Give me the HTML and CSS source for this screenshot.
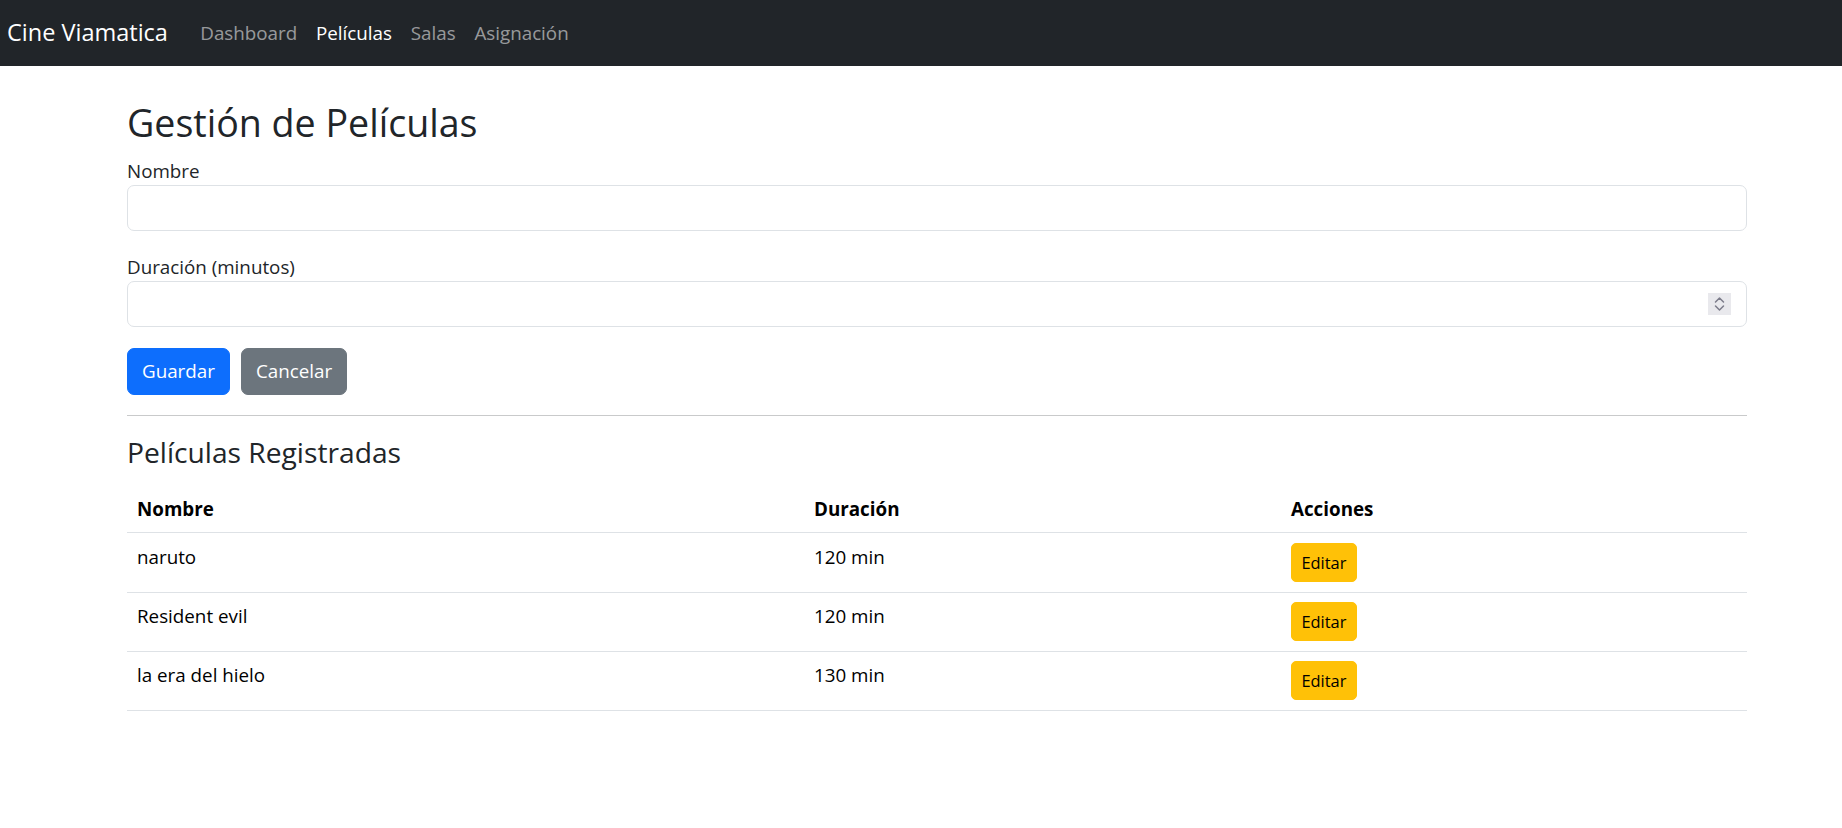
FILE: index.html
```html
<!DOCTYPE html>
<html lang="es">
<head>
<meta charset="utf-8">
<title>Cine Viamatica</title>
<link rel="stylesheet" href="styles.css">
</head>
<body>
<nav class="navbar">
  <a class="brand" href="#">Cine Viamatica</a>
  <ul class="nav">
    <li><a class="nav-link" href="#">Dashboard</a></li>
    <li><a class="nav-link active" href="#">Películas</a></li>
    <li><a class="nav-link" href="#">Salas</a></li>
    <li><a class="nav-link" href="#">Asignación</a></li>
  </ul>
</nav>
<main class="container">
  <h2 class="title">Gestión de Películas</h2>
  <form class="form">
    <div class="field field-first">
      <label class="label" for="nombre">Nombre</label>
      <input class="control" id="nombre" type="text">
    </div>
    <div class="field field-second">
      <label class="label" for="duracion">Duración (minutos)</label>
      <div class="number-wrap">
        <input class="control control-number" id="duracion" type="number">
        <span class="spinner">
          <svg width="23" height="22" viewBox="0 0 23 22"><polyline points="7.5,9 11.5,5 15.5,9" fill="none" stroke="#7b7b8a" stroke-width="1.5" stroke-linecap="round" stroke-linejoin="round"/><polyline points="7.5,13 11.5,17 15.5,13" fill="none" stroke="#7b7b8a" stroke-width="1.5" stroke-linecap="round" stroke-linejoin="round"/></svg>
        </span>
      </div>
    </div>
    <div class="actions">
      <button class="btn btn-primary" type="button">Guardar</button>
      <button class="btn btn-secondary" type="button">Cancelar</button>
    </div>
  </form>
  <hr class="divider">
  <h4 class="subtitle">Películas Registradas</h4>
  <table class="table">
    <thead>
      <tr><th class="col-name">Nombre</th><th class="col-dur">Duración</th><th>Acciones</th></tr>
    </thead>
    <tbody>
      <tr><td>naruto</td><td>120 min</td><td><button class="btn-sm" type="button">Editar</button></td></tr>
      <tr><td>Resident evil</td><td>120 min</td><td><button class="btn-sm" type="button">Editar</button></td></tr>
      <tr><td>la era del hielo</td><td>130 min</td><td><button class="btn-sm" type="button">Editar</button></td></tr>
    </tbody>
  </table>
</main>
</body>
</html>
```
FILE: styles.css
```css
html, body {
  margin: 0;
  padding: 0;
  background: #fff;
}
body {
  font-family: "Open Sans", "Noto Sans", sans-serif;
  font-size: 18.8px;
  line-height: 28.2px;
  color: #212529;
}
.navbar {
  display: flex;
  align-items: center;
  height: 66px;
  padding: 0 7px;
  background: #212529;
}
.brand {
  font-size: 23.5px;
  line-height: 35.25px;
  color: #fff;
  text-decoration: none;
  margin-right: 23px;
}
.nav {
  display: flex;
  list-style: none;
  margin: 0;
  padding: 0;
}
.nav-link {
  display: block;
  padding: 0 9.4px;
  font-size: 18.8px;
  line-height: 28.2px;
  color: rgba(255, 255, 255, 0.55);
  text-decoration: none;
}
.nav-link.active {
  color: #fff;
}
.container {
  width: 1620px;
  margin: 0 0 0 127px;
  padding-top: 34px;
}
.title {
  margin: 0 0 11.5px;
  font-size: 37.6px;
  line-height: 1.2;
  font-weight: 500;
}
.form {
  margin: 0;
}
.label {
  display: block;
  line-height: 28.2px;
}
.field-first {
  margin-bottom: 21.3px;
}
.field-second {
  margin-bottom: 20.4px;
}
.control {
  display: block;
  box-sizing: border-box;
  width: 100%;
  height: 46.5px;
  margin: 0;
  padding: 0 14px;
  border: 1px solid #dee2e6;
  border-radius: 7px;
  font-family: inherit;
  font-size: 18.8px;
  color: #212529;
  background: #fff;
  outline: none;
}
.control-number {
  -moz-appearance: textfield;
}
.control-number::-webkit-inner-spin-button,
.control-number::-webkit-outer-spin-button {
  -webkit-appearance: none;
  margin: 0;
}
.number-wrap {
  position: relative;
}
.spinner {
  position: absolute;
  right: 16px;
  top: 12px;
  width: 23px;
  height: 22px;
  background: #e9e9ed;
  display: block;
}
.spinner svg {
  display: block;
}
.actions {
  display: flex;
  gap: 11px;
}
.btn {
  box-sizing: border-box;
  height: 47px;
  padding: 0 14px;
  border: 1px solid transparent;
  border-radius: 7px;
  font-family: inherit;
  font-size: 18.8px;
  line-height: 45px;
  color: #fff;
  cursor: pointer;
}
.btn-primary {
  background: #0d6efd;
  border-color: #0d6efd;
}
.btn-secondary {
  background: #6c757d;
  border-color: #6c757d;
}
.divider {
  margin: 20px 0 20px;
  border: 0;
  border-top: 1px solid #c9cacb;
  height: 0;
}
.subtitle {
  margin: 0 0 15.9px;
  font-size: 28.2px;
  line-height: 1.2;
  font-weight: 500;
}
.table {
  width: 100%;
  border-collapse: collapse;
  color: #000;
  vertical-align: top;
}
.table th,
.table td {
  padding: 9.4px 10px;
  text-align: left;
  vertical-align: top;
  border-bottom: 1px solid #dee2e6;
  line-height: 28.2px;
}
.table th {
  font-weight: 700;
}
.table td {
  padding-top: 9.6px;
  padding-bottom: 9.6px;
}
.col-name {
  width: 657px;
}
.col-dur {
  width: 457px;
}
.btn-sm {
  box-sizing: border-box;
  height: 39px;
  padding: 0 9.4px;
  border: 1px solid #ffc107;
  border-radius: 5px;
  background: #ffc107;
  color: #000;
  font-family: inherit;
  font-size: 16.45px;
  line-height: 37px;
  cursor: pointer;
  vertical-align: top;
}
```
